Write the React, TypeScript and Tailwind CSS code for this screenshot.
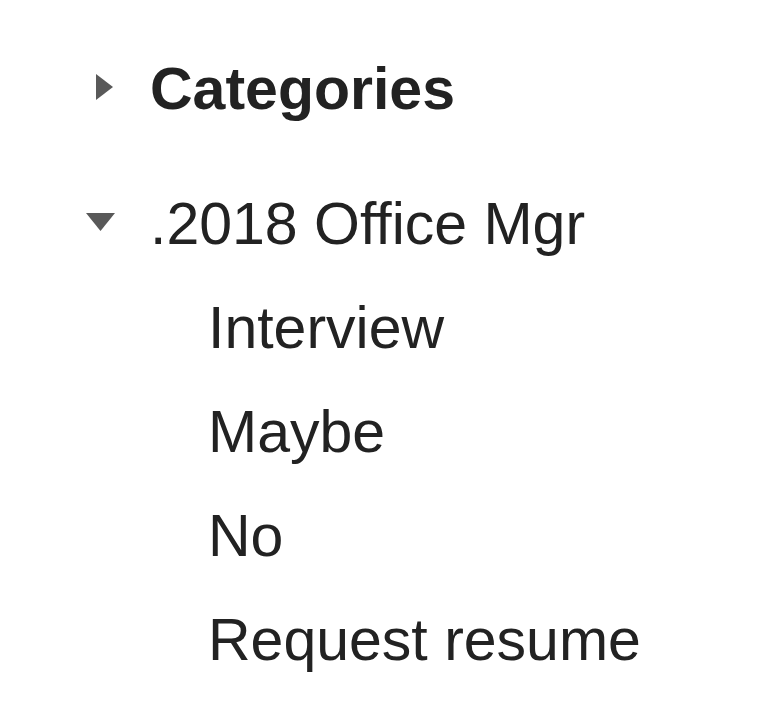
import React from "react";

type Folder = {
  name: string;
  open: boolean;
  bold?: boolean;
  children?: string[];
};

const folders: Folder[] = [
  { name: "Categories", open: false, bold: true },
  {
    name: ".2018 Office Mgr",
    open: true,
    children: ["Interview", "Maybe", "No", "Request resume"],
  },
];

function Caret({ open }: { open: boolean }) {
  return (
    <svg width="40" height="40" viewBox="0 0 40 40" className="block">
      {open ? (
        <polygon points="2,9 31,9 16.5,27" fill="#595959" />
      ) : (
        <polygon points="12,5 29,18 12,31" fill="#595959" />
      )}
    </svg>
  );
}

export default function App() {
  return (
    <div
      className="min-h-[710px] w-[782px] bg-white pl-[84px] pt-[37px] text-[#222222]"
      style={{ fontFamily: '"Liberation Sans", Arial, sans-serif' }}
    >
      {folders.map((f, i) => (
        <div key={f.name} className={i === 0 ? "mb-[31px]" : ""}>
          <div className="flex h-[104px] items-center">
            <div className="w-[66px] shrink-0">
              <Caret open={f.open} />
            </div>
            <span
              className={`whitespace-nowrap text-[59px] leading-[104px] ${
                f.bold ? "font-bold" : "font-normal"
              }`}
            >
              {f.name}
            </span>
          </div>
          {f.open &&
            f.children?.map((c) => (
              <div
                key={c}
                className="h-[104px] whitespace-nowrap pl-[124px] text-[59px] leading-[104px]"
              >
                {c}
              </div>
            ))}
        </div>
      ))}
    </div>
  );
}
